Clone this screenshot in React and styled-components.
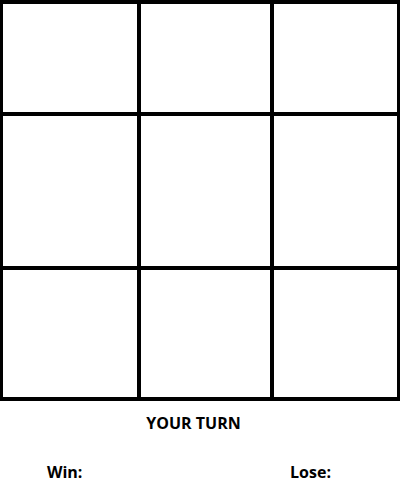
import styled, { createGlobalStyle } from "styled-components";

const cells = Array.from({ length: 9 }, (_, i) => i);

const App = () => {
  return (
    <>
      <GlobalStyle />
      <Game>
        <Board>
          {cells.map((i) => (
            <Cell key={i} />
          ))}
        </Board>

        <Status>YOUR TURN</Status>

        <Score>
          <ScoreItem>Win:</ScoreItem>
          <ScoreItem>Lose:</ScoreItem>
        </Score>
      </Game>
    </>
  );
};

const GlobalStyle = createGlobalStyle`
  body {
    margin: 0;
    background-color: #fff;
    font-family: "Open Sans", "Noto Sans", sans-serif;
  }
`;

const Game = styled.div`
  display: flex;
  flex-direction: column;
  width: 400px;
`;

const Board = styled.div`
  background-color: #000;
  display: grid;
  gap: 4px;
  grid-template-columns: 134px 129px 123px;
  grid-template-rows: 108px 150px 127px;
  padding: 4px 3px 4px 3px;
`;

const Cell = styled.div`
  background-color: #fff;
  cursor: pointer;
`;

const Status = styled.div`
  color: #000;
  font-size: 16px;
  font-weight: 700;
  line-height: 22px;
  margin-top: 11px;
  padding-right: 13px;
  text-align: center;
`;

const Score = styled.div`
  display: flex;
  justify-content: space-between;
  margin-top: 27px;
  padding: 0 69px 0 47px;
`;

const ScoreItem = styled.span`
  color: #000;
  font-size: 16px;
  font-weight: 700;
  line-height: 22px;
`;

export default App;
